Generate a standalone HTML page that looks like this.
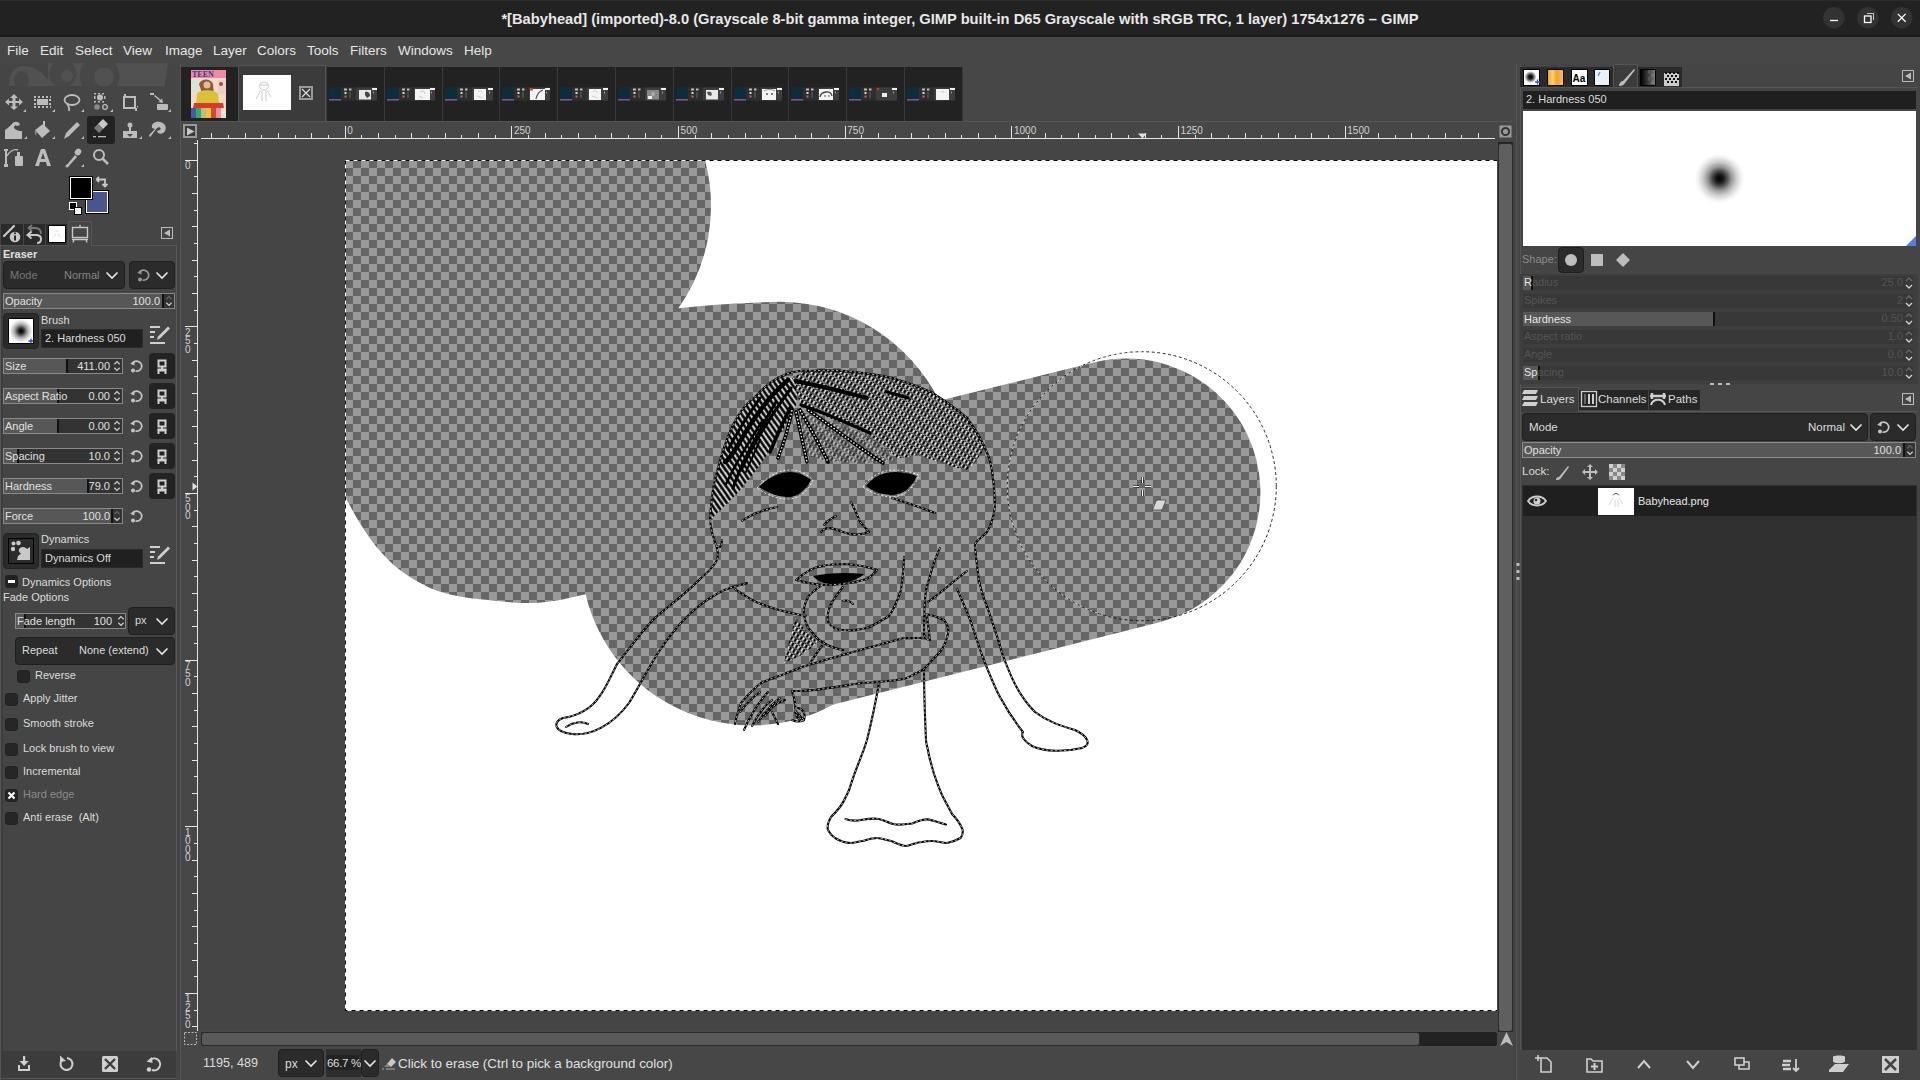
<!DOCTYPE html>
<html><head><meta charset="utf-8">
<style>
*{margin:0;padding:0;box-sizing:border-box}
html,body{width:1920px;height:1080px;overflow:hidden;background:#474747;font-family:"Liberation Sans",sans-serif;color:#dcdcdc}
.a{position:absolute}
#title{left:0;top:0;width:1920px;height:37px;background:#222222}
#title .t{left:0;width:1920px;top:11px;text-align:center;font-weight:bold;font-size:14.7px;color:#e8e8e8;white-space:nowrap}
.wb{width:22px;height:22px;border-radius:11px;background:#323232;top:7px}
#menu{left:0;top:37px;width:1920px;height:27px;background:#474747}
#menu span{position:absolute;top:6px;font-size:13.5px;color:#e6e6e6}

.lbl{position:absolute;font-size:11px;color:#dcdcdc;white-space:pre}
.dim{color:#8a8a8a}
.combo{position:absolute;background:#2b2b2b;border:1px solid #1f1f1f;border-radius:4px}
.sl{position:absolute;height:16px;background:#333;border:1px solid #8a8a8a;overflow:hidden}
.sl .f{position:absolute;left:0;top:0;height:14px;background:#575757}
.sl .k{position:absolute;top:0;width:1px;height:14px;background:#111}
.sl .n{position:absolute;left:1px;top:1px;font-size:11px;color:#e0e0e0;white-space:pre}
.sl .v{position:absolute;top:1px;font-size:11px;color:#e0e0e0;text-align:right}
.chk{position:absolute;width:13px;height:13px;background:#262626;border:1px solid #222;border-radius:3px}
.chain{position:absolute;width:26px;height:26px;background:#232323;border-radius:4px}
</style></head><body>
<svg width="0" height="0" style="position:absolute">
 <defs>
  <symbol id="reset" viewBox="0 0 14 14"><path d="M4.2 3.6 A5 5 0 1 1 6.5 12" fill="none" stroke="#c4c4c4" stroke-width="1.7"/><path d="M1.2 4.8 L5.6 1.2 L5.4 6.4 Z" fill="#c4c4c4"/><circle cx="4" cy="11.5" r="2" fill="#c4c4c4"/></symbol>
  <symbol id="chain" viewBox="0 0 26 26"><rect x="9.5" y="7.5" width="7" height="6" fill="none" stroke="#d0d0d0" stroke-width="2"/><rect x="12" y="13" width="2" height="3" fill="#d0d0d0"/><path d="M9.5 21 L9.5 17.5 L16.5 17.5 L16.5 21" fill="none" stroke="#d0d0d0" stroke-width="2"/><rect x="8.5" y="15.5" width="9" height="2" fill="#d0d0d0"/></symbol>
  <symbol id="spin" viewBox="0 0 10 16"><path d="M2 6 L5 3 L8 6 M2 10 L5 13 L8 10" fill="none" stroke="#cfcfcf" stroke-width="1.4"/></symbol>
  <symbol id="spind" viewBox="0 0 10 16"><path d="M2 6 L5 3 L8 6" fill="none" stroke="#666" stroke-width="1.4"/><path d="M2 10 L5 13 L8 10" fill="none" stroke="#cfcfcf" stroke-width="1.4"/></symbol>
  <symbol id="chev" viewBox="0 0 14 10"><path d="M1.5 2.5 L7 8 L12.5 2.5" fill="none" stroke="#e6e6e6" stroke-width="1.6"/></symbol>
  <symbol id="edit" viewBox="0 0 20 20"><path d="M0 1h10v2h-10zM0 6h5v2h-5zM0 11h4v2h-4zM0 17h15v2h-15z" fill="#cfcfcf"/><path d="M7 15 L8 11.5 L18 1.5 L20 3.5 L10 13.5 Z" fill="#cfcfcf"/></symbol>
<!-- SHOTS -->
<symbol id="shot0" viewBox="0 0 48 14"><rect width="48" height="14" fill="#262626"/><rect x="0" y="0.5" width="12" height="11.5" fill="#0d2d3a"/><rect x="0" y="12" width="12" height="1.5" fill="#7a5a8a"/><rect x="12" y="0.5" width="15" height="13" fill="#2e2e2e"/><rect x="15" y="1.5" width="3" height="2" fill="#c8bcae"/><rect x="20" y="1.5" width="2.5" height="2" fill="#bbb"/><rect x="15.5" y="5" width="2" height="2" fill="#ddd"/><rect x="15.5" y="8.5" width="2" height="2" fill="#c66"/><rect x="20.5" y="5" width="1" height="6" fill="#666"/><rect x="27" y="0.5" width="21" height="13" fill="#3d3d3d"/><rect x="30" y="3" width="12" height="9.5" fill="#e8e8e8"/><path d="M36 5 C40 4 41 7 41 9 L38 11 L36 8 Z" fill="#444"/><rect x="43" y="1" width="5" height="2" fill="#f0f0f0"/><rect x="44" y="4.5" width="1" height="2" fill="#999"/></symbol>
<symbol id="shot1" viewBox="0 0 48 14"><rect width="48" height="14" fill="#262626"/><rect x="0" y="0.5" width="12" height="11.5" fill="#0d2d3a"/><rect x="0" y="12" width="12" height="1.5" fill="#7a5a8a"/><rect x="12" y="0.5" width="15" height="13" fill="#2e2e2e"/><rect x="15" y="1.5" width="3" height="2" fill="#c8bcae"/><rect x="20" y="1.5" width="2.5" height="2" fill="#bbb"/><rect x="15.5" y="5" width="2" height="2" fill="#ddd"/><rect x="15.5" y="8.5" width="2" height="2" fill="#c66"/><rect x="20.5" y="5" width="1" height="6" fill="#666"/><rect x="27" y="0.5" width="21" height="13" fill="#3d3d3d"/><rect x="28" y="2" width="15" height="11" fill="#f4f4f4"/><path d="M33 5 C35 3 38 4 38 7 M32 9 L36 11" stroke="#999" stroke-width="0.5" fill="none"/><rect x="43" y="1" width="5" height="2" fill="#f0f0f0"/><rect x="44" y="4.5" width="1" height="2" fill="#999"/></symbol>
<symbol id="shot2" viewBox="0 0 48 14"><rect width="48" height="14" fill="#262626"/><rect x="0" y="0.5" width="12" height="11.5" fill="#0d2d3a"/><rect x="0" y="12" width="12" height="1.5" fill="#7a5a8a"/><rect x="12" y="0.5" width="15" height="13" fill="#2e2e2e"/><rect x="15" y="1.5" width="3" height="2" fill="#c8bcae"/><rect x="20" y="1.5" width="2.5" height="2" fill="#bbb"/><rect x="15.5" y="5" width="2" height="2" fill="#ddd"/><rect x="15.5" y="8.5" width="2" height="2" fill="#c66"/><rect x="20.5" y="5" width="1" height="6" fill="#666"/><rect x="27" y="0.5" width="21" height="13" fill="#3d3d3d"/><rect x="29" y="2" width="12" height="11" fill="#f4f4f4"/><path d="M33 5 C34 3 37 3 37 6 M32 9 L38 11" stroke="#aaa" stroke-width="0.5" fill="none"/><rect x="43" y="1" width="5" height="2" fill="#f0f0f0"/><rect x="44" y="4.5" width="1" height="2" fill="#999"/></symbol>
<symbol id="shot3" viewBox="0 0 48 14"><rect width="48" height="14" fill="#262626"/><rect x="0" y="0.5" width="12" height="11.5" fill="#0d2d3a"/><rect x="0" y="12" width="12" height="1.5" fill="#7a5a8a"/><rect x="12" y="0.5" width="15" height="13" fill="#2e2e2e"/><rect x="15" y="1.5" width="3" height="2" fill="#c8bcae"/><rect x="20" y="1.5" width="2.5" height="2" fill="#bbb"/><rect x="15.5" y="5" width="2" height="2" fill="#ddd"/><rect x="15.5" y="8.5" width="2" height="2" fill="#c66"/><rect x="20.5" y="5" width="1" height="6" fill="#666"/><rect x="27" y="0.5" width="21" height="13" fill="#3d3d3d"/><rect x="28" y="2" width="15" height="11" fill="#f4f4f4"/><path d="M34 12 C35 7 38 4 41 3" stroke="#555" stroke-width="1.2" fill="none"/><rect x="28" y="1" width="3" height="2.5" fill="#c44"/><rect x="43" y="1" width="5" height="2" fill="#f0f0f0"/><rect x="44" y="4.5" width="1" height="2" fill="#999"/></symbol>
<symbol id="shot4" viewBox="0 0 48 14"><rect width="48" height="14" fill="#262626"/><rect x="0" y="0.5" width="12" height="11.5" fill="#0d2d3a"/><rect x="0" y="12" width="12" height="1.5" fill="#7a5a8a"/><rect x="12" y="0.5" width="15" height="13" fill="#2e2e2e"/><rect x="15" y="1.5" width="3" height="2" fill="#c8bcae"/><rect x="20" y="1.5" width="2.5" height="2" fill="#bbb"/><rect x="15.5" y="5" width="2" height="2" fill="#ddd"/><rect x="15.5" y="8.5" width="2" height="2" fill="#c66"/><rect x="20.5" y="5" width="1" height="6" fill="#666"/><rect x="27" y="0.5" width="21" height="13" fill="#3d3d3d"/><rect x="29" y="2" width="12" height="11" fill="#f4f4f4"/><path d="M33 5 C34 3 37 3 37 6 M32 9 L38 11" stroke="#aaa" stroke-width="0.5" fill="none"/><rect x="43" y="1" width="5" height="2" fill="#f0f0f0"/><rect x="44" y="4.5" width="1" height="2" fill="#999"/></symbol>
<symbol id="shot5" viewBox="0 0 48 14"><rect width="48" height="14" fill="#262626"/><rect x="0" y="0.5" width="12" height="11.5" fill="#0d2d3a"/><rect x="0" y="12" width="12" height="1.5" fill="#7a5a8a"/><rect x="12" y="0.5" width="15" height="13" fill="#2e2e2e"/><rect x="15" y="1.5" width="3" height="2" fill="#c8bcae"/><rect x="20" y="1.5" width="2.5" height="2" fill="#bbb"/><rect x="15.5" y="5" width="2" height="2" fill="#ddd"/><rect x="15.5" y="8.5" width="2" height="2" fill="#c66"/><rect x="20.5" y="5" width="1" height="6" fill="#666"/><rect x="27" y="0.5" width="21" height="13" fill="#3d3d3d"/><rect x="29" y="3" width="12" height="9.5" fill="#888"/><rect x="30" y="9" width="4" height="3" fill="#eee"/><circle cx="35" cy="7" r="2" fill="#aaa"/><rect x="43" y="1" width="5" height="2" fill="#f0f0f0"/><rect x="44" y="4.5" width="1" height="2" fill="#999"/></symbol>
<symbol id="shot6" viewBox="0 0 48 14"><rect width="48" height="14" fill="#262626"/><rect x="0" y="0.5" width="12" height="11.5" fill="#0d2d3a"/><rect x="0" y="12" width="12" height="1.5" fill="#7a5a8a"/><rect x="12" y="0.5" width="15" height="13" fill="#2e2e2e"/><rect x="15" y="1.5" width="3" height="2" fill="#c8bcae"/><rect x="20" y="1.5" width="2.5" height="2" fill="#bbb"/><rect x="15.5" y="5" width="2" height="2" fill="#ddd"/><rect x="15.5" y="8.5" width="2" height="2" fill="#c66"/><rect x="20.5" y="5" width="1" height="6" fill="#666"/><rect x="27" y="0.5" width="21" height="13" fill="#3d3d3d"/><rect x="30" y="3" width="12" height="9.5" fill="#e8e8e8"/><path d="M31 5 C35 4 37 6 35 9 L32 8 Z" fill="#555"/><rect x="43" y="1" width="5" height="2" fill="#f0f0f0"/><rect x="44" y="4.5" width="1" height="2" fill="#999"/></symbol>
<symbol id="shot7" viewBox="0 0 48 14"><rect width="48" height="14" fill="#262626"/><rect x="0" y="0.5" width="12" height="11.5" fill="#0d2d3a"/><rect x="0" y="12" width="12" height="1.5" fill="#7a5a8a"/><rect x="12" y="0.5" width="15" height="13" fill="#2e2e2e"/><rect x="15" y="1.5" width="3" height="2" fill="#c8bcae"/><rect x="20" y="1.5" width="2.5" height="2" fill="#bbb"/><rect x="15.5" y="5" width="2" height="2" fill="#ddd"/><rect x="15.5" y="8.5" width="2" height="2" fill="#c66"/><rect x="20.5" y="5" width="1" height="6" fill="#666"/><rect x="27" y="0.5" width="21" height="13" fill="#3d3d3d"/><rect x="28" y="2" width="14" height="11" fill="#f4f4f4"/><circle cx="33" cy="7" r="1" fill="#555"/><circle cx="38" cy="7" r="1" fill="#555"/><path d="M30 4 C33 2 38 2 41 4" stroke="#666" stroke-width="0.7" fill="none"/><rect x="43" y="1" width="5" height="2" fill="#f0f0f0"/><rect x="44" y="4.5" width="1" height="2" fill="#999"/></symbol>
<symbol id="shot8" viewBox="0 0 48 14"><rect width="48" height="14" fill="#262626"/><rect x="0" y="0.5" width="12" height="11.5" fill="#0d2d3a"/><rect x="0" y="12" width="12" height="1.5" fill="#7a5a8a"/><rect x="12" y="0.5" width="15" height="13" fill="#2e2e2e"/><rect x="15" y="1.5" width="3" height="2" fill="#c8bcae"/><rect x="20" y="1.5" width="2.5" height="2" fill="#bbb"/><rect x="15.5" y="5" width="2" height="2" fill="#ddd"/><rect x="15.5" y="8.5" width="2" height="2" fill="#c66"/><rect x="20.5" y="5" width="1" height="6" fill="#666"/><rect x="27" y="0.5" width="21" height="13" fill="#3d3d3d"/><rect x="28" y="2" width="14" height="11" fill="#f4f4f4"/><path d="M29 10 C30 4 40 3 41 9" stroke="#444" stroke-width="1.3" fill="none"/><circle cx="34" cy="9" r="0.8" fill="#444"/><circle cx="38" cy="9" r="0.8" fill="#444"/><rect x="43" y="1" width="5" height="2" fill="#f0f0f0"/><rect x="44" y="4.5" width="1" height="2" fill="#999"/></symbol>
<symbol id="shot9" viewBox="0 0 48 14"><rect width="48" height="14" fill="#262626"/><rect x="0" y="0.5" width="12" height="11.5" fill="#0d2d3a"/><rect x="0" y="12" width="12" height="1.5" fill="#7a5a8a"/><rect x="12" y="0.5" width="15" height="13" fill="#2e2e2e"/><rect x="15" y="1.5" width="3" height="2" fill="#c8bcae"/><rect x="20" y="1.5" width="2.5" height="2" fill="#bbb"/><rect x="15.5" y="5" width="2" height="2" fill="#ddd"/><rect x="15.5" y="8.5" width="2" height="2" fill="#c66"/><rect x="20.5" y="5" width="1" height="6" fill="#666"/><rect x="27" y="0.5" width="21" height="13" fill="#3d3d3d"/><rect x="33" y="6" width="5" height="4" fill="#eee"/><circle cx="29" cy="2" r="1.2" fill="#c33"/><rect x="43" y="1" width="5" height="2" fill="#f0f0f0"/><rect x="44" y="4.5" width="1" height="2" fill="#999"/></symbol>
<symbol id="shot10" viewBox="0 0 48 14"><rect width="48" height="14" fill="#262626"/><rect x="0" y="0.5" width="12" height="11.5" fill="#0d2d3a"/><rect x="0" y="12" width="12" height="1.5" fill="#7a5a8a"/><rect x="12" y="0.5" width="15" height="13" fill="#2e2e2e"/><rect x="15" y="1.5" width="3" height="2" fill="#c8bcae"/><rect x="20" y="1.5" width="2.5" height="2" fill="#bbb"/><rect x="15.5" y="5" width="2" height="2" fill="#ddd"/><rect x="15.5" y="8.5" width="2" height="2" fill="#c66"/><rect x="20.5" y="5" width="1" height="6" fill="#666"/><rect x="27" y="0.5" width="21" height="13" fill="#3d3d3d"/><rect x="29" y="2" width="13" height="11" fill="#f4f4f4"/><path d="M34 5 C35 4 37 4 37 6" stroke="#aaa" stroke-width="0.5" fill="none"/><rect x="43" y="1" width="5" height="2" fill="#f0f0f0"/><rect x="44" y="4.5" width="1" height="2" fill="#999"/></symbol>
<!-- END SHOTS -->
 </defs>
</svg>
<div id="title" class="a">
  <div class="a t">*[Babyhead] (imported)-8.0 (Grayscale 8-bit gamma integer, GIMP built-in D65 Grayscale with sRGB TRC, 1 layer) 1754x1276 – GIMP</div>
  <div class="a" style="left:0;top:0;width:1920px;height:1px;background:#2c2c2c"></div>
  <div class="a" style="left:0;top:35px;width:1920px;height:2px;background:#1c1c1c"></div>
  <svg class="a" style="left:1820px;top:4px" width="96" height="28"><g fill="#333"><circle cx="13.8" cy="13.8" r="10.7"/><circle cx="47.9" cy="13.8" r="10.7"/><circle cx="81.7" cy="13.8" r="10.7"/></g>
  <path d="M10 16.5 H18" stroke="#fff" stroke-width="1.3"/>
  <rect x="44.5" y="12" width="6.5" height="6.5" fill="none" stroke="#fff" stroke-width="1.3"/><path d="M47 9.5 H53.5 V16" fill="none" stroke="#ddd" stroke-width="0.9"/>
  <path d="M77.8 9.9 L85.6 17.7 M85.6 9.9 L77.8 17.7" stroke="#fff" stroke-width="1.3"/></svg>
</div>
<div id="menu" class="a">
  <span style="left:7px">File</span><span style="left:40px">Edit</span><span style="left:75px">Select</span><span style="left:123px">View</span><span style="left:165px">Image</span><span style="left:213px">Layer</span><span style="left:257px">Colors</span><span style="left:307px">Tools</span><span style="left:350px">Filters</span><span style="left:398px">Windows</span><span style="left:464px">Help</span>
</div>
<!-- CANVAS AREA -->
<div id="canvasarea">
<div class="a" style="left:181px;top:67px;width:782px;height:54px;background:#222"></div>
<div class="a" style="left:238px;top:65px;width:88px;height:57px;background:#3b3b3b;border:1px solid #555;border-bottom:none"></div>
<svg class="a" style="left:191px;top:70px" width="35" height="48" viewBox="0 0 35 48">
<rect width="35" height="48" fill="#f2d9cc"/>
<rect width="35" height="8" fill="#ef8aa2"/>
<text x="1" y="7" font-family="Liberation Serif" font-weight="bold" font-size="8" fill="#2c3c8c">TEEN</text>
<path d="M8 14 C10 8 20 8 22 14 L23 26 L12 26 Z" fill="#8a5a3a"/>
<circle cx="16" cy="15" r="3.5" fill="#e8b89a"/>
<path d="M6 24 C8 19 24 19 27 24 L28 33 L5 33 Z" fill="#d9c23a"/>
<path d="M3 33 L32 33 L33 38 L2 38 Z" fill="#d83a2a"/>
<rect x="27" y="10" width="7" height="14" fill="#e8d0c8"/><circle cx="30" cy="14" r="2" fill="#a84a3a"/>
<rect x="1" y="10" width="6" height="12" fill="#cfe8d8"/>
<rect y="38" width="5" height="10" fill="#4a5aa0"/><rect x="5" y="38" width="5" height="10" fill="#2eab78"/><rect x="10" y="38" width="5" height="10" fill="#c2bd72"/><rect x="15" y="38" width="5" height="10" fill="#f0c038"/><rect x="20" y="38" width="5" height="10" fill="#cc4a3a"/><rect x="25" y="38" width="5" height="10" fill="#f4909a"/><rect x="30" y="38" width="5" height="10" fill="#f2e0d0"/>
</svg>
<div class="a" style="left:243px;top:75px;width:48px;height:35px;background:#fff"></div>
<svg class="a" style="left:243px;top:75px" width="48" height="35"><g fill="none" stroke="#aaa" stroke-width="0.6"><ellipse cx="21" cy="11" rx="4.5" ry="4"/><path d="M17 10 L25 10 M18 15 L13 24 M24 15 L28 22 M19 16 L19 26 M23 16 L23 26"/></g></svg>
<div class="a" style="left:299px;top:86px;width:14px;height:14px;border:2px solid #999"></div>
<svg class="a" style="left:301px;top:88px" width="10" height="10"><path d="M1 1 L9 9 M9 1 L1 9" stroke="#ddd" stroke-width="1.2"/></svg>
<div class="a" style="left:326.0px;top:67px;width:1px;height:54px;background:#3a3a3a"></div>
<svg class="a" style="left:329.0px;top:87px" width="48" height="14"><use href="#shot0"/></svg>
<div class="a" style="left:383.8px;top:67px;width:1px;height:54px;background:#3a3a3a"></div>
<svg class="a" style="left:386.8px;top:87px" width="48" height="14"><use href="#shot1"/></svg>
<div class="a" style="left:441.6px;top:67px;width:1px;height:54px;background:#3a3a3a"></div>
<svg class="a" style="left:444.6px;top:87px" width="48" height="14"><use href="#shot2"/></svg>
<div class="a" style="left:499.4px;top:67px;width:1px;height:54px;background:#3a3a3a"></div>
<svg class="a" style="left:502.4px;top:87px" width="48" height="14"><use href="#shot3"/></svg>
<div class="a" style="left:557.2px;top:67px;width:1px;height:54px;background:#3a3a3a"></div>
<svg class="a" style="left:560.2px;top:87px" width="48" height="14"><use href="#shot4"/></svg>
<div class="a" style="left:615.0px;top:67px;width:1px;height:54px;background:#3a3a3a"></div>
<svg class="a" style="left:618.0px;top:87px" width="48" height="14"><use href="#shot5"/></svg>
<div class="a" style="left:672.8px;top:67px;width:1px;height:54px;background:#3a3a3a"></div>
<svg class="a" style="left:675.8px;top:87px" width="48" height="14"><use href="#shot6"/></svg>
<div class="a" style="left:730.6px;top:67px;width:1px;height:54px;background:#3a3a3a"></div>
<svg class="a" style="left:733.6px;top:87px" width="48" height="14"><use href="#shot7"/></svg>
<div class="a" style="left:788.4px;top:67px;width:1px;height:54px;background:#3a3a3a"></div>
<svg class="a" style="left:791.4px;top:87px" width="48" height="14"><use href="#shot8"/></svg>
<div class="a" style="left:846.2px;top:67px;width:1px;height:54px;background:#3a3a3a"></div>
<svg class="a" style="left:849.2px;top:87px" width="48" height="14"><use href="#shot9"/></svg>
<div class="a" style="left:904.0px;top:67px;width:1px;height:54px;background:#3a3a3a"></div>
<svg class="a" style="left:907.0px;top:87px" width="48" height="14"><use href="#shot10"/></svg>
<div class="a" style="left:962px;top:67px;width:1px;height:54px;background:#3a3a3a"></div>
<div class="a" style="left:180px;top:121px;width:1336px;height:1px;background:#555"></div>
<div class="a" style="left:183px;top:124px;width:14px;height:14px;border:2px solid #9a9a9a;background:#3a3a3a"></div>
<svg class="a" style="left:186px;top:127px" width="9" height="9"><path d="M1 0.5 L8.5 4.5 L1 8.5 Z" fill="#c8c8c8"/></svg>
<svg class="a" style="left:198px;top:121px" width="1300" height="19" viewBox="198 121 1300 19"><rect x="201" y="138" width="1294" height="1" fill="#e6e6e6"/><rect x="211" y="133" width="1" height="5" fill="#e6e6e6"/><rect x="228" y="135" width="1" height="3" fill="#e6e6e6"/><rect x="245" y="133" width="1" height="5" fill="#e6e6e6"/><rect x="261" y="135" width="1" height="3" fill="#e6e6e6"/><rect x="278" y="133" width="1" height="5" fill="#e6e6e6"/><rect x="295" y="135" width="1" height="3" fill="#e6e6e6"/><rect x="311" y="133" width="1" height="5" fill="#e6e6e6"/><rect x="328" y="135" width="1" height="3" fill="#e6e6e6"/><rect x="345" y="126" width="1" height="12" fill="#e6e6e6"/><text x="347.3" y="134" font-size="10" fill="#d0d0d0" font-family="Liberation Sans">0</text><rect x="361" y="135" width="1" height="3" fill="#e6e6e6"/><rect x="378" y="133" width="1" height="5" fill="#e6e6e6"/><rect x="395" y="135" width="1" height="3" fill="#e6e6e6"/><rect x="411" y="133" width="1" height="5" fill="#e6e6e6"/><rect x="428" y="135" width="1" height="3" fill="#e6e6e6"/><rect x="445" y="133" width="1" height="5" fill="#e6e6e6"/><rect x="461" y="135" width="1" height="3" fill="#e6e6e6"/><rect x="478" y="133" width="1" height="5" fill="#e6e6e6"/><rect x="495" y="135" width="1" height="3" fill="#e6e6e6"/><rect x="511" y="126" width="1" height="12" fill="#e6e6e6"/><text x="514.0" y="134" font-size="10" fill="#d0d0d0" font-family="Liberation Sans">250</text><rect x="528" y="135" width="1" height="3" fill="#e6e6e6"/><rect x="545" y="133" width="1" height="5" fill="#e6e6e6"/><rect x="561" y="135" width="1" height="3" fill="#e6e6e6"/><rect x="578" y="133" width="1" height="5" fill="#e6e6e6"/><rect x="595" y="135" width="1" height="3" fill="#e6e6e6"/><rect x="611" y="133" width="1" height="5" fill="#e6e6e6"/><rect x="628" y="135" width="1" height="3" fill="#e6e6e6"/><rect x="645" y="133" width="1" height="5" fill="#e6e6e6"/><rect x="661" y="135" width="1" height="3" fill="#e6e6e6"/><rect x="678" y="126" width="1" height="12" fill="#e6e6e6"/><text x="680.6" y="134" font-size="10" fill="#d0d0d0" font-family="Liberation Sans">500</text><rect x="695" y="135" width="1" height="3" fill="#e6e6e6"/><rect x="711" y="133" width="1" height="5" fill="#e6e6e6"/><rect x="728" y="135" width="1" height="3" fill="#e6e6e6"/><rect x="745" y="133" width="1" height="5" fill="#e6e6e6"/><rect x="761" y="135" width="1" height="3" fill="#e6e6e6"/><rect x="778" y="133" width="1" height="5" fill="#e6e6e6"/><rect x="795" y="135" width="1" height="3" fill="#e6e6e6"/><rect x="811" y="133" width="1" height="5" fill="#e6e6e6"/><rect x="828" y="135" width="1" height="3" fill="#e6e6e6"/><rect x="845" y="126" width="1" height="12" fill="#e6e6e6"/><text x="847.3" y="134" font-size="10" fill="#d0d0d0" font-family="Liberation Sans">750</text><rect x="861" y="135" width="1" height="3" fill="#e6e6e6"/><rect x="878" y="133" width="1" height="5" fill="#e6e6e6"/><rect x="895" y="135" width="1" height="3" fill="#e6e6e6"/><rect x="911" y="133" width="1" height="5" fill="#e6e6e6"/><rect x="928" y="135" width="1" height="3" fill="#e6e6e6"/><rect x="945" y="133" width="1" height="5" fill="#e6e6e6"/><rect x="961" y="135" width="1" height="3" fill="#e6e6e6"/><rect x="978" y="133" width="1" height="5" fill="#e6e6e6"/><rect x="995" y="135" width="1" height="3" fill="#e6e6e6"/><rect x="1011" y="126" width="1" height="12" fill="#e6e6e6"/><text x="1014.0" y="134" font-size="10" fill="#d0d0d0" font-family="Liberation Sans">1000</text><rect x="1028" y="135" width="1" height="3" fill="#e6e6e6"/><rect x="1045" y="133" width="1" height="5" fill="#e6e6e6"/><rect x="1061" y="135" width="1" height="3" fill="#e6e6e6"/><rect x="1078" y="133" width="1" height="5" fill="#e6e6e6"/><rect x="1095" y="135" width="1" height="3" fill="#e6e6e6"/><rect x="1111" y="133" width="1" height="5" fill="#e6e6e6"/><rect x="1128" y="135" width="1" height="3" fill="#e6e6e6"/><rect x="1145" y="133" width="1" height="5" fill="#e6e6e6"/><rect x="1161" y="135" width="1" height="3" fill="#e6e6e6"/><rect x="1178" y="126" width="1" height="12" fill="#e6e6e6"/><text x="1180.6" y="134" font-size="10" fill="#d0d0d0" font-family="Liberation Sans">1250</text><rect x="1195" y="135" width="1" height="3" fill="#e6e6e6"/><rect x="1211" y="133" width="1" height="5" fill="#e6e6e6"/><rect x="1228" y="135" width="1" height="3" fill="#e6e6e6"/><rect x="1245" y="133" width="1" height="5" fill="#e6e6e6"/><rect x="1261" y="135" width="1" height="3" fill="#e6e6e6"/><rect x="1278" y="133" width="1" height="5" fill="#e6e6e6"/><rect x="1295" y="135" width="1" height="3" fill="#e6e6e6"/><rect x="1311" y="133" width="1" height="5" fill="#e6e6e6"/><rect x="1328" y="135" width="1" height="3" fill="#e6e6e6"/><rect x="1345" y="126" width="1" height="12" fill="#e6e6e6"/><text x="1347.3" y="134" font-size="10" fill="#d0d0d0" font-family="Liberation Sans">1500</text><rect x="1361" y="135" width="1" height="3" fill="#e6e6e6"/><rect x="1378" y="133" width="1" height="5" fill="#e6e6e6"/><rect x="1395" y="135" width="1" height="3" fill="#e6e6e6"/><rect x="1411" y="133" width="1" height="5" fill="#e6e6e6"/><rect x="1428" y="135" width="1" height="3" fill="#e6e6e6"/><rect x="1445" y="133" width="1" height="5" fill="#e6e6e6"/><rect x="1461" y="135" width="1" height="3" fill="#e6e6e6"/><rect x="1478" y="133" width="1" height="5" fill="#e6e6e6"/></svg>
<svg class="a" style="left:181px;top:139px" width="18" height="893" viewBox="181 139 18 893"><rect x="197" y="140" width="1" height="891" fill="#e6e6e6"/><rect x="194" y="143" width="3" height="1" fill="#e6e6e6"/><rect x="185" y="160" width="12" height="1" fill="#e6e6e6"/><text x="185" y="168.8" font-size="10" fill="#d0d0d0" font-family="Liberation Sans">0</text><rect x="194" y="176" width="3" height="1" fill="#e6e6e6"/><rect x="192" y="193" width="5" height="1" fill="#e6e6e6"/><rect x="194" y="210" width="3" height="1" fill="#e6e6e6"/><rect x="192" y="226" width="5" height="1" fill="#e6e6e6"/><rect x="194" y="243" width="3" height="1" fill="#e6e6e6"/><rect x="192" y="260" width="5" height="1" fill="#e6e6e6"/><rect x="194" y="276" width="3" height="1" fill="#e6e6e6"/><rect x="192" y="293" width="5" height="1" fill="#e6e6e6"/><rect x="194" y="310" width="3" height="1" fill="#e6e6e6"/><rect x="185" y="326" width="12" height="1" fill="#e6e6e6"/><text x="185" y="335.5" font-size="10" fill="#d0d0d0" font-family="Liberation Sans">2</text><text x="185" y="344.1" font-size="10" fill="#d0d0d0" font-family="Liberation Sans">5</text><text x="185" y="352.7" font-size="10" fill="#d0d0d0" font-family="Liberation Sans">0</text><rect x="194" y="343" width="3" height="1" fill="#e6e6e6"/><rect x="192" y="360" width="5" height="1" fill="#e6e6e6"/><rect x="194" y="376" width="3" height="1" fill="#e6e6e6"/><rect x="192" y="393" width="5" height="1" fill="#e6e6e6"/><rect x="194" y="410" width="3" height="1" fill="#e6e6e6"/><rect x="192" y="426" width="5" height="1" fill="#e6e6e6"/><rect x="194" y="443" width="3" height="1" fill="#e6e6e6"/><rect x="192" y="460" width="5" height="1" fill="#e6e6e6"/><rect x="194" y="476" width="3" height="1" fill="#e6e6e6"/><rect x="185" y="493" width="12" height="1" fill="#e6e6e6"/><text x="185" y="502.1" font-size="10" fill="#d0d0d0" font-family="Liberation Sans">5</text><text x="185" y="510.7" font-size="10" fill="#d0d0d0" font-family="Liberation Sans">0</text><text x="185" y="519.3" font-size="10" fill="#d0d0d0" font-family="Liberation Sans">0</text><rect x="194" y="510" width="3" height="1" fill="#e6e6e6"/><rect x="192" y="526" width="5" height="1" fill="#e6e6e6"/><rect x="194" y="543" width="3" height="1" fill="#e6e6e6"/><rect x="192" y="560" width="5" height="1" fill="#e6e6e6"/><rect x="194" y="576" width="3" height="1" fill="#e6e6e6"/><rect x="192" y="593" width="5" height="1" fill="#e6e6e6"/><rect x="194" y="610" width="3" height="1" fill="#e6e6e6"/><rect x="192" y="626" width="5" height="1" fill="#e6e6e6"/><rect x="194" y="643" width="3" height="1" fill="#e6e6e6"/><rect x="185" y="660" width="12" height="1" fill="#e6e6e6"/><text x="185" y="668.8" font-size="10" fill="#d0d0d0" font-family="Liberation Sans">7</text><text x="185" y="677.4" font-size="10" fill="#d0d0d0" font-family="Liberation Sans">5</text><text x="185" y="686.0" font-size="10" fill="#d0d0d0" font-family="Liberation Sans">0</text><rect x="194" y="676" width="3" height="1" fill="#e6e6e6"/><rect x="192" y="693" width="5" height="1" fill="#e6e6e6"/><rect x="194" y="710" width="3" height="1" fill="#e6e6e6"/><rect x="192" y="726" width="5" height="1" fill="#e6e6e6"/><rect x="194" y="743" width="3" height="1" fill="#e6e6e6"/><rect x="192" y="760" width="5" height="1" fill="#e6e6e6"/><rect x="194" y="776" width="3" height="1" fill="#e6e6e6"/><rect x="192" y="793" width="5" height="1" fill="#e6e6e6"/><rect x="194" y="810" width="3" height="1" fill="#e6e6e6"/><rect x="185" y="826" width="12" height="1" fill="#e6e6e6"/><text x="185" y="835.5" font-size="10" fill="#d0d0d0" font-family="Liberation Sans">1</text><text x="185" y="844.1" font-size="10" fill="#d0d0d0" font-family="Liberation Sans">0</text><text x="185" y="852.7" font-size="10" fill="#d0d0d0" font-family="Liberation Sans">0</text><text x="185" y="861.3" font-size="10" fill="#d0d0d0" font-family="Liberation Sans">0</text><rect x="194" y="843" width="3" height="1" fill="#e6e6e6"/><rect x="192" y="860" width="5" height="1" fill="#e6e6e6"/><rect x="194" y="876" width="3" height="1" fill="#e6e6e6"/><rect x="192" y="893" width="5" height="1" fill="#e6e6e6"/><rect x="194" y="910" width="3" height="1" fill="#e6e6e6"/><rect x="192" y="926" width="5" height="1" fill="#e6e6e6"/><rect x="194" y="943" width="3" height="1" fill="#e6e6e6"/><rect x="192" y="960" width="5" height="1" fill="#e6e6e6"/><rect x="194" y="976" width="3" height="1" fill="#e6e6e6"/><rect x="185" y="993" width="12" height="1" fill="#e6e6e6"/><text x="185" y="1002.1" font-size="10" fill="#d0d0d0" font-family="Liberation Sans">1</text><text x="185" y="1010.7" font-size="10" fill="#d0d0d0" font-family="Liberation Sans">2</text><text x="185" y="1019.3" font-size="10" fill="#d0d0d0" font-family="Liberation Sans">5</text><text x="185" y="1027.9" font-size="10" fill="#d0d0d0" font-family="Liberation Sans">0</text><rect x="194" y="1010" width="3" height="1" fill="#e6e6e6"/><rect x="192" y="1026" width="5" height="1" fill="#e6e6e6"/></svg>
<div class="a" style="left:198px;top:139px;width:1299px;height:891px;overflow:hidden;background:#454545">
<svg class="a" style="left:0;top:0" width="1299" height="891" viewBox="198 139 1299 891">
<defs><pattern id="chk" x="345" y="160" width="16" height="16" patternUnits="userSpaceOnUse"><rect width="16" height="16" fill="#666"/><rect width="8" height="8" fill="#999"/><rect x="8" y="8" width="8" height="8" fill="#999"/></pattern>
<pattern id="hatch" width="5" height="5" patternUnits="userSpaceOnUse" patternTransform="rotate(-55)"><rect width="5" height="5" fill="#fff"/><rect width="2.2" height="5" fill="#000"/></pattern></defs>
<rect x="345" y="160" width="1170" height="851" fill="#fff"/>
<path d="M345,160 L705,160.3 A176.6,176.6 0 0,1 678.3,308.3 Q725,303 779.5,301.7 A178.6,178.6 0 0,1 939.2,400.8 L1091.2,363.1 A134,134 0 1,1 1156.8,622.9 L833.4,704.6 A170.8,170.8 0 0,1 585.6,594.2 C575.3,596.4 564.9,599.2 554.8,600.7 C544.7,602.2 536.3,603.1 525.2,603.0 C514.1,602.9 499.2,601.1 488.1,600.0 C477.0,598.9 468.4,598.4 458.5,596.3 C448.6,594.2 438.8,591.8 428.9,587.4 C419.0,583.0 407.9,576.3 399.3,569.6 C390.7,562.9 383.7,555.3 377.0,547.4 C370.3,539.5 364.5,530.5 359.3,522.2 C354.1,513.9 350.2,505.9 345.6,497.8 Z" fill="url(#chk)"/>
<defs>
<pattern id="hatch2" width="4.2" height="5" patternUnits="userSpaceOnUse" patternTransform="rotate(30)"><rect x="2" width="1.3" height="5" fill="#fff"/><rect width="2" height="3.6" fill="#000"/><rect x="2" y="3.6" width="1.3" height="1.4" fill="#000"/></pattern>
<pattern id="hatch3" width="4.5" height="5" patternUnits="userSpaceOnUse" patternTransform="rotate(-35)"><rect x="2.2" width="1.4" height="5" fill="#eee"/><rect width="2.2" height="5" fill="#000"/></pattern>
</defs>
<!-- hair fills -->
<path d="M710,521 C711,500 713,485 717,472 C722,452 727,438 733,425 C740,410 747,403 755,397 C763,388 771,381 780,377 L793,378 C797,385 798,395 796,405 C790,418 780,435 767,455 C758,468 750,478 742,488 C733,498 724,507 717,513 Z" fill="url(#hatch3)"/>
<path d="M793,378 C800,373 805,371 808,371 C822,370 836,370 850,372 C864,373 878,375 892,378 C906,382 920,387 933,393 C946,402 957,409 967,418 C974,426 979,434 983,442 C985,447 983,452 980,455 C976,462 972,466 967,470 C958,468 950,466 942,463 C933,460 925,457 917,455 C910,457 903,458 897,458 C888,450 878,441 867,433 C845,425 822,415 800,405 Z" fill="url(#hatch2)"/>
<path d="M797,408 C820,418 845,428 867,434 C878,442 888,452 895,460 C880,463 860,463 840,462 C825,460 812,458 805,455 C800,440 797,425 797,408 Z" fill="url(#hatch2)" opacity="0.55"/>
<!-- black streaks -->
<g fill="none" stroke="#000" stroke-linecap="round">
 <path d="M788,380 C770,395 752,420 738,445 C732,455 728,460 725,462" stroke-width="4.5"/>
 <path d="M776,402 C765,420 752,445 742,465 C738,475 735,482 733,488" stroke-width="3"/>
 <path d="M796,381 C820,386 845,392 867,398" stroke-width="4"/>
 <path d="M801,405 C825,413 850,424 870,433" stroke-width="3.2"/>
 <path d="M887,392 C895,394 902,396 908,398" stroke-width="3"/>
 <path d="M760,440 C755,452 750,462 746,472" stroke-width="2"/>
 <path d="M791,388 C775,410 755,440 741,470" stroke-width="3"/>
 <path d="M763,420 C750,440 735,465 726,484" stroke-width="2.5"/>
 <path d="M760,398 C748,415 737,432 728,450" stroke-width="3"/>
</g>
<!-- forehead strands -->
<g fill="none" stroke="#000" stroke-width="3.6" stroke-linecap="round">
 <path d="M792,410 C788,430 783,445 778,458"/>
 <path d="M796,412 C800,430 804,448 807,462"/>
 <path d="M800,410 C810,428 820,445 828,462"/>
 <path d="M808,410 C830,425 855,445 883,463"/>
 <path d="M790,408 C784,420 777,435 770,452"/>
</g>
<g fill="none" stroke="#fff" stroke-width="1.4" stroke-dasharray="1.5 2" stroke-linecap="butt">
 <path d="M792,410 C788,430 783,445 778,458"/>
 <path d="M796,412 C800,430 804,448 807,462"/>
 <path d="M800,410 C810,428 820,445 828,462"/>
 <path d="M808,410 C830,425 855,445 883,463"/>
</g>
<!-- eyes -->
<path d="M759,487 C768,477 780,472 790,472 C799,472 806,476 811,480 C806,490 798,497 788,497 C776,497 767,492 759,487 Z" fill="#000"/><path d="M757,488 C767,476 780,470 790,470 C800,470 808,475 813,480 C808,491 799,499 788,499 C775,499 766,494 757,488 Z" fill="none" stroke="#fff" stroke-width="1" stroke-dasharray="2 2" opacity="0.8"/>
<path d="M866,486 C874,476 884,472 895,472 C904,472 911,474 917,476 C912,487 904,494 893,495 C881,495 872,491 866,486 Z" fill="#000"/><path d="M863,487 C872,474 884,470 895,470 C905,470 913,473 919,475 C914,488 905,496 893,497 C880,497 870,492 863,487 Z" fill="none" stroke="#fff" stroke-width="1" stroke-dasharray="2 2" opacity="0.8"/>
<!-- mouth dark -->
<path d="M813,576 C828,573 845,572 864,574 C858,580 845,584 830,584 C822,583 816,580 813,576 Z" fill="#000"/>
<!-- chin shading -->
<path d="M784,663 C788,645 792,628 796,618 C803,628 810,636 818,642 C810,650 798,658 784,663 Z" fill="url(#hatch2)"/>
<!-- fingers cluster -->

<g id="lines" fill="none" stroke-linecap="round" stroke-linejoin="round">
 <path d="M710,521 C711,500 713,485 717,472 C722,452 727,438 733,425 C740,410 747,403 755,397 C763,388 771,381 780,377 C790,372 800,370 808,371 C836,369 864,372 892,378 C906,382 920,387 933,393 C946,402 957,409 967,418 C976,430 983,442 988,455 C992,465 994,480 995,505 C994,518 991,525 987,532 C982,538 976,540 975,545 C976,560 978,572 979,581 C982,595 986,605 989,612 C994,628 998,638 1002,653 C1010,675 1018,695 1035,712 C1048,722 1062,726 1075,730 C1088,736 1092,745 1082,748 C1065,752 1045,752 1032,746 C1025,742 1020,736 1023,732"/>
 <path d="M710,521 C711,530 714,540 716,545 C720,550 722,545 722,540 M716,545 C718,552 719,556 716,562 C712,568 706,574 700,579 C690,590 670,605 655,618 C638,635 625,655 617,664 C610,678 605,690 599,697 C592,708 578,716 563,718 C552,722 554,732 572,734 C590,736 612,726 629,703 C640,685 648,668 660,650 C672,632 686,616 700,605 C712,596 722,590 733,587 C740,585 745,584 747,583"/>
 <path d="M566,727 C573,722 582,721 588,724"/>
 <path d="M735,589 C745,596 752,601 761,604 C772,608 785,612 796,614 C800,615 803,615 806,616"/>
 <path d="M742,521 C750,515 762,510 777,507"/>
 <path d="M892,498 C905,502 920,507 935,513"/>
 <path d="M851,502 C855,510 858,516 860,522 C864,526 867,530 869,532 C860,536 850,535 840,531 C832,528 826,526 821,532 M824,525 C828,520 832,518 836,516"/>
 <path d="M796,580 C805,572 815,567 822,566 C830,564 838,564 847,564 C858,565 868,567 877,570 C874,574 870,577 867,579 C850,584 835,585 822,585 C812,584 803,582 796,580 Z"/>
 <path d="M822,585 C815,590 810,594 808,597 C805,603 803,608 804,614 C805,622 807,627 810,630 C815,636 818,640 822,642 C830,647 836,649 843,650"/>
 <path d="M843,587 C838,593 833,600 830,606 C828,612 827,618 828,622 C832,628 836,630 843,630 C850,631 858,630 867,628 C875,625 882,620 889,616 C896,606 899,596 901,590 C903,575 904,566 904,557"/>
 <path d="M843,601 C846,600 850,601 853,604"/>
 <path d="M940,548 C934,560 930,575 926,590 C924,605 924,620 924,634 C925,638 927,640 930,640 C928,625 927,615 926,614 M926,614 C932,615 938,617 944,620 C948,625 949,630 948,634 C946,642 943,648 940,652 C932,660 928,665 924,669 C915,674 910,677 904,679 C890,681 878,682 863,683 C840,686 820,690 802,691 C797,691 794,691 792,691 C795,700 796,705 795,710 C797,714 800,716 804,720 C800,722 796,722 792,720"/>
 <path d="M928,638 C920,638 912,638 904,638 C885,643 868,648 853,652 C835,657 818,662 802,667 C795,670 788,672 782,675 C775,677 768,680 761,683 C752,690 746,697 741,703 C738,712 736,718 735,724"/>
 <path d="M744,730 C750,716 758,703 768,692 M752,726 C758,714 764,706 772,700 M758,722 C765,712 772,704 780,698 M740,712 C746,704 752,698 760,692 M765,716 C770,708 776,703 785,700 M772,712 L778,724"/>
 <path d="M795,710 C796,718 800,722 804,720 C806,714 803,709 798,708"/>
 <path d="M810,663 C814,657 818,651 822,646"/>
 <path d="M967,571 C955,580 942,592 928,602"/>
 <path d="M957,589 C962,600 967,612 971,622 C976,638 980,650 985,663 C990,675 995,688 1000,697 C1008,712 1015,722 1023,732"/>
 <path d="M879,683 C876,700 872,720 867,740 C864,750 861,757 859,762 C855,772 852,780 849.5,789 C846,797 843,803 840,807 C836,812 833,815 831,817 C828,822 827,826 828,830 C830,834 832,836 835,838 C840,841 845,843 850.5,843 C855,843 859,841 863,841 C868,839 872,838 877,838 C882,838 886,840 891,841 C896,843 901,846 906.6,846 C912,845 917,842 922,842 C926,841 929,841 932,841 C937,841 942,843 947,843 C952,842 957,840 960.5,838 C963,835 963,832 962.6,829.6 C960,823 956,818 952,814 C949,808 945,801 942,795 C939,788 936,780 934,774 C932,766 929,758 928,750 C927,746 926,743 926,740 C925,718 924,695 924,669"/>
 <path d="M845.5,819 C851,821 856,821 861,820 C867,819 873,818 879,819 C885,820 890,824 896,824.5 C901,825 906,824 912,823.5 C917,822 922,819 927,819.4 C933,820 940,823 946,824.5"/>
</g>
<use href="#lines" stroke="#000" stroke-width="2.1"/>
<use href="#lines" stroke="#fff" stroke-width="0.8" stroke-dasharray="1.5 3" opacity="0.9"/>

<rect x="345.5" y="160.5" width="1170" height="850" fill="none" stroke="#000" stroke-width="1"/>
<rect x="345.5" y="160.5" width="1170" height="850" fill="none" stroke="#fff" stroke-width="1" stroke-dasharray="4 4"/>
<circle cx="1141.8" cy="486.2" r="134.5" fill="none" stroke="#111" stroke-width="1" stroke-dasharray="3 2.5" opacity="0.9"/>
<path d="M1141.8,351.7 A134.5,134.5 0 0,0 1007.3,486.2 A134.5,134.5 0 0,0 1100,614" fill="none" stroke="#ddd" stroke-width="1" stroke-dasharray="3 2.5" opacity="0.8"/>
<g stroke="#000" stroke-width="2.6" opacity="0.7"><path d="M1133,486.5 h6 M1145,486.5 h6 M1142.5,477 v6 M1142.5,490 v6"/></g>
<g stroke="#fff" stroke-width="1"><path d="M1133,486.5 h6 M1145,486.5 h6 M1142.5,477 v6 M1142.5,490 v6"/></g>
<path d="M1152.5,510 L1156,501 Q1157,500 1158.5,500 L1166,500 L1162.5,509 Q1162,510 1160.5,510 Z" fill="#d8d8d8" stroke="#444" stroke-width="0.8"/>
</svg></div>
<svg class="a" style="left:1136px;top:132px" width="12" height="7"><path d="M2 1.5 L10.5 1.5 L6.5 6.5 Z" fill="#e0e0e0"/></svg>
<svg class="a" style="left:191px;top:481px" width="7" height="11"><path d="M1.5 1.5 L6.5 5.5 L1.5 9.5 Z" fill="#e0e0e0"/></svg>
<div class="a" style="left:201px;top:1032px;width:1296px;height:14px;background:#222;border-radius:2px"></div>
<div class="a" style="left:201px;top:1032px;width:1219px;height:14px;background:#5a5a5a;border:1px solid #2a2a2a;border-radius:3px"></div>
<div class="a" style="left:1498px;top:142px;width:15px;height:890px;background:#222"></div>
<div class="a" style="left:1498px;top:143px;width:15px;height:889px;background:#5f5f5f;border:1px solid #2a2a2a;border-radius:3px"></div>
<svg class="a" style="left:1499px;top:125px" width="13" height="13"><rect x="0.5" y="0.5" width="12" height="12" fill="#999"/><circle cx="6.5" cy="6.5" r="3.6" fill="none" stroke="#333" stroke-width="2"/></svg>
<svg class="a" style="left:184px;top:1032px" width="13" height="13"><rect x="0.5" y="0.5" width="12" height="12" fill="#4a4a4a" stroke="#bbb" stroke-dasharray="2 1.5"/></svg>
<svg class="a" style="left:1498px;top:1031px" width="17" height="17"><path d="M8.5 1 L15 15 L8.5 11 L2 15 Z" fill="#bdbdbd"/></svg>
<div class="lbl" style="left:203px;top:1056px;font-size:12.6px;color:#dcdcdc">1195, 489</div>
<div class="combo" style="left:278px;top:1049px;width:46px;height:28px"></div>
<div class="lbl" style="left:285px;top:1057px;font-size:12px">px</div>
<svg class="a" style="left:304px;top:1058px" width="14" height="10"><use href="#chev"/></svg>
<div class="a" style="left:326px;top:1049px;width:35px;height:28px;background:#2e2e2e"></div>
<div class="a" style="left:327px;top:1055px;width:32px;height:15px;background:#222"></div>
<div class="lbl" style="left:327px;top:1057px;font-size:11.5px;letter-spacing:-0.3px">66.7 %</div>
<div class="combo" style="left:361px;top:1049px;width:18px;height:28px"></div>
<svg class="a" style="left:363px;top:1058px" width="14" height="10"><use href="#chev"/></svg>
<svg class="a" style="left:381px;top:1054px" width="16" height="16"><path d="M6 10 L11 4 L15 8 L10 13 Z" fill="#c8c8c8"/><path d="M3 13 L6 10 L9 13 Z" fill="#888"/><rect x="1" y="14.5" width="2" height="1" fill="#aaa"/><rect x="5" y="14.5" width="9" height="1" fill="#aaa"/></svg>
<div class="lbl" style="left:398px;top:1056px;font-size:13.4px;color:#e0e0e0">Click to erase (Ctrl to pick a background color)</div>
<div class="a" style="left:1513px;top:121px;width:3px;height:959px;background:#454545"></div>
<div class="a" style="left:1516px;top:64px;width:1px;height:1016px;background:#555"></div>
<div class="a" style="left:1520px;top:64px;width:1px;height:1016px;background:#555"></div>
<svg class="a" style="left:175px;top:562px" width="6" height="20"><rect x="1.5" y="1" width="3" height="3" fill="#bbb"/><rect x="1.5" y="8" width="3" height="3" fill="#bbb"/><rect x="1.5" y="15" width="3" height="3" fill="#bbb"/></svg>
<svg class="a" style="left:1515px;top:562px" width="6" height="20"><rect x="1.5" y="1" width="3" height="3" fill="#bbb"/><rect x="1.5" y="8" width="3" height="3" fill="#bbb"/><rect x="1.5" y="15" width="3" height="3" fill="#bbb"/></svg>
</div>
<!-- END CANVAS -->
<!-- LEFT -->
<div id="left" class="a" style="left:0;top:0;width:181px;height:1080px;">
 <div class="a" style="left:0;top:64px;width:176px;height:1016px;background:#454545"></div>
 <div class="a" style="left:176px;top:245px;width:1px;height:806px;background:#585858"></div>
 <div class="a" style="left:177px;top:64px;width:3px;height:1016px;background:#454545"></div>
 <div class="a" style="left:180px;top:64px;width:1px;height:1016px;background:#555"></div>
 <!-- wilber -->
 <svg class="a" style="left:0;top:60px" width="176" height="30" viewBox="0 60 176 30">
  <defs><clipPath id="wb"><rect x="0" y="63" width="176" height="23"/></clipPath></defs>
  <g clip-path="url(#wb)">
   <path d="M9 86 C9 72 15 66 24 66 C34 66 42 72 48 80 L48 63 L82 63 L82 86 Z" fill="#515151"/>
   <path d="M117 63 L168 63 L164.5 86 L117 86 Z" fill="#515151"/>
   <rect x="80" y="63" width="38" height="23" fill="#515151"/>
   <ellipse cx="21.5" cy="80" rx="7.5" ry="9" fill="#474747"/>
   <circle cx="62.8" cy="74" r="13.6" fill="#474747"/>
   <circle cx="67" cy="76" r="6.1" fill="#515151"/>
   <circle cx="99.6" cy="76" r="19.9" fill="#474747"/>
   <circle cx="104" cy="77" r="9.8" fill="#515151"/>
  </g>
 </svg>
 <!-- tool icons -->
 <svg class="a" style="left:0;top:88px" width="176" height="84" viewBox="0 88 176 84">
  <rect x="87" y="116" width="28" height="28" rx="3" fill="#222"/>
  <g fill="#bcbcbc" stroke="none">
   <!-- move -->
   <path d="M14 94 L18 98 L15.5 98 L15.5 101 L19 101 L19 98.5 L23 102 L19 105.5 L19 103 L15.5 103 L15.5 106.5 L18 106.5 L14 110 L10 106.5 L12.5 106.5 L12.5 103 L9 103 L9 105.5 L5 102 L9 98.5 L9 101 L12.5 101 L12.5 98 L10 98 Z"/>
   <!-- rect select -->
   <path d="M34 96h2v2h-2zM38 96h2v2h-2zM42 96h2v2h-2zM46 96h2v2h-2zM50 96h1v2h-1zM34 106h2v2h-2zM38 106h2v2h-2zM42 106h2v2h-2zM46 106h2v2h-2zM50 106h1v2h-1zM34 99h2v2h-2zM34 103h2v2h-2zM49 99h2v2h-2zM49 103h2v2h-2z"/>
   <rect x="37" y="99" width="11" height="6"/>
   <!-- lasso -->
   <ellipse cx="72" cy="100" rx="7.5" ry="5" fill="none" stroke="#bcbcbc" stroke-width="1.8"/>
   <path d="M67 103 C68 106 70 107 69 111" fill="none" stroke="#bcbcbc" stroke-width="1.8"/>
   <!-- fuzzy -->
   <path d="M94 93h2v1.5h-2zM98 93h2v1.5h-2zM102 93h2v1.5h-2zM94 101h2v1.5h-2zM98 101h2v1.5h-2zM102 101h2v1.5h-2zM94 96h1.5v3h-1.5zM104 96h1.5v3h-1.5z"/>
   <circle cx="100" cy="97.5" r="3"/>
   <circle cx="97" cy="107" r="2.8" fill="#8a8a8a"/>
   <circle cx="105" cy="107" r="2.3" fill="none" stroke="#bcbcbc" stroke-width="1.3"/>
   <!-- crop -->
   <path d="M123 96h13v13h-13z M125 98v9h9v-9z" fill-rule="evenodd"/><rect x="124" y="94" width="2" height="2"/><rect x="135" y="108" width="2" height="3"/><rect x="137" y="106" width="1" height="1.5"/>
   <!-- transform -->
   <rect x="150" y="93" width="4" height="2"/>
   <path d="M155 95 L161 100 L162 98 L163 103 L158 102 L160 101 L154 96 Z"/>
   <rect x="157" y="104" width="11" height="6" rx="1"/>
   <!-- corner triangles row1 -->
   <path d="M23 112h3v-3zM52 112h3v-3zM81 112h3v-3zM110 112h3v-3zM168 112h3v-3z"/>
   <!-- heal -->
   <path d="M5 139 L5 130 C8 128 10 126 12 124 C14 121 19 121 20 125 L17 126 C16 125 15 125 14 127 C14 129 17 131 22 131 L22 139 Z"/>
   <!-- bucket -->
   <path d="M35 130 L43 124 L50 131 L42 138 Z"/>
   <rect x="43" y="121" width="2" height="9"/>
   <path d="M35 130 C34 133 36 136 36 136 L37 131 Z" fill="#8a8a8a"/>
   <!-- pencil -->
   <path d="M64 139 L66 133 L77 122 L80 125 L69 136 Z"/>
   <!-- eraser -->
   <path d="M98 124 L103 119 L108 124 L103 129 Z" fill="#c8c8c8"/>
   <path d="M94 128 L98 124 L103 129 L99 133 Z" fill="#7a7a7a"/>
   <rect x="93" y="136" width="3" height="1.3"/><rect x="98" y="136" width="8" height="1.3"/>
   <!-- clone -->
   <circle cx="130" cy="125" r="2.5"/><rect x="129" y="127" width="2" height="4"/>
   <path d="M123 131h14v7h-14z"/><path d="M127 134h6l-3 3z" fill="#454545"/>
   <!-- smudge -->
   <path d="M152 128 C151 123 156 121 160 122 C165 123 167 127 165 131 C163 135 157 134 157 131 L160 130 C162 128 159 126 157 128 L151 136 C150 138 148 136 150 134 L155 129 Z"/>
   <path d="M24 139h3v-3zM52 139h3v-3zM81 139h3v-3zM139 139h3v-3zM168 139h3v-3z"/>
   <!-- paths -->
   <rect x="5" y="149" width="2" height="17"/><rect x="4" y="149" width="4" height="2"/><rect x="4" y="164" width="4" height="3"/>
   <path d="M7 156 C10 151 14 149 18 150" fill="none" stroke="#bcbcbc" stroke-width="1.3"/>
   <rect x="15" y="156" width="8" height="10" rx="1"/><rect x="17" y="152" width="3" height="4"/>
   <!-- text -->
   <path d="M35 166 L41 149 L45 149 L51 166 L47 166 L46 162 L40 162 L39 166 Z M41 159 L45 159 L43 153 Z" fill-rule="evenodd"/>
   <!-- picker -->
   <path d="M66 166 L75 155 L77 157 L68 167 Z"/><circle cx="67" cy="166" r="1.5"/>
   <ellipse cx="78" cy="152" rx="3" ry="3.5" transform="rotate(40 78 152)"/>
   <path d="M81 167h3v-3z"/>
   <!-- zoom -->
   <circle cx="99" cy="155" r="5" fill="none" stroke="#bcbcbc" stroke-width="2"/>
   <path d="M102 158 L108 164" stroke="#bcbcbc" stroke-width="2.5"/>
  </g>
 </svg>
 <!-- fg/bg -->
 <div class="a" style="left:85px;top:190px;width:24px;height:24px;background:#000;padding:1px"><div style="width:22px;height:22px;border:1px solid #fff;background:#4a5590"></div></div>
 <div class="a" style="left:69px;top:176px;width:24px;height:24px;background:#000;padding:1px"><div style="width:22px;height:22px;border:1px solid #fff;background:#000"></div></div>
 <svg class="a" style="left:96px;top:175px" width="14" height="14"><path d="M3 2 L0.5 4.5 L3 7 M1 4.5 L9 4.5 L9 11 M6.5 9 L9 11.5 L11.5 9" fill="none" stroke="#c8c8c8" stroke-width="1.8"/></svg>
 <div class="a" style="left:69px;top:202px;width:8px;height:8px;background:#000;border:1px solid #fff"></div>
 <div class="a" style="left:74px;top:207px;width:8px;height:8px;background:#fff;border:1px solid #000"></div>
 <!-- tabs -->
 <div class="a" style="left:0;top:245px;width:176px;height:1px;background:#555"></div>
 <div class="a" style="left:1px;top:224px;width:22px;height:21px;background:#2a2a2a"></div>
 <div class="a" style="left:24px;top:224px;width:21px;height:21px;background:#2a2a2a"></div>
 <div class="a" style="left:46px;top:224px;width:21px;height:21px;background:#2a2a2a"></div>
 <div class="a" style="left:68px;top:221px;width:24px;height:25px;background:#454545;border:1px solid #555;border-bottom:none"></div>
 <svg class="a" style="left:0;top:221px" width="92" height="25" viewBox="0 221 92 25">
  <path d="M4 236 L14 226" stroke="#c8c8c8" stroke-width="2.2" stroke-linecap="round"/><circle cx="15" cy="237" r="5.3" fill="#c8c8c8"/><rect x="14" y="235.5" width="2" height="5" fill="#2a2a2a"/><rect x="14" y="232.5" width="2" height="1.6" fill="#2a2a2a"/>
  <path d="M41 234 C41 229 38 228 35 228 L29 228" fill="none" stroke="#777" stroke-width="1.8"/><path d="M32 225 L28.5 228 L32 231" fill="none" stroke="#777" stroke-width="1.8"/>
  <path d="M37 243 C40 243 41 241 41 239 C41 236 39 235 36 235 L28 235" fill="none" stroke="#c8c8c8" stroke-width="2"/><path d="M31.5 231.5 L27.5 235 L31.5 238.5" fill="none" stroke="#c8c8c8" stroke-width="2"/>
  <rect x="48" y="225" width="18" height="18" fill="#000"/><rect x="49" y="226" width="16" height="16" fill="#fff"/><path d="M55 231 h4 M56 233 L54 237 M58 233 L60 237" stroke="#ccc" stroke-width="0.6"/>
  <rect x="72.5" y="227.5" width="15" height="10" fill="none" stroke="#c8c8c8" stroke-width="1.4"/><path d="M78.5 226.5 L80 224.5 L81.5 226.5 Z" fill="#c8c8c8"/><path d="M72 239.5 L88 239.5 M74 239.5 L73 242.5 M86 239.5 L87 242.5" stroke="#c8c8c8" stroke-width="1.3"/>
 </svg>


 <div class="lbl" style="left:3px;top:248px;font-weight:bold;font-size:11px;color:#e0e0e0">Eraser</div>
 <div class="combo" style="left:3px;top:261px;width:122px;height:28px"></div>
 <div class="lbl" style="left:10px;top:269px;color:#777">Mode</div>
 <div class="lbl" style="left:64px;top:269px;color:#868686">Normal</div>
 <svg class="a" style="left:105px;top:270px" width="14" height="10"><use href="#chev"/></svg>
 <div class="combo" style="left:129px;top:261px;width:46px;height:28px"></div>
 <svg class="a" style="left:136px;top:268px" width="14" height="14" opacity="0.7"><use href="#reset"/></svg>
 <svg class="a" style="left:155px;top:270px" width="14" height="10"><use href="#chev"/></svg>
 <div class="sl" style="left:3px;top:293px;width:172px;height:16px"><div class="f" style="width:158px"></div><div class="k" style="left:158px;width:2px"></div><div class="n">Opacity</div><div class="v" style="left:100px;width:56px">100.0</div><svg class="a" style="left:160px;top:0" width="10" height="14"><use href="#spind"/></svg></div>
 <div class="a" style="left:3px;top:313px;width:36px;height:36px;background:#2b2b2b;border:1px solid #232323;border-radius:4px"></div>
 <div class="a" style="left:8px;top:318px;width:26px;height:26px;border:1px solid #000;background:radial-gradient(circle at 50% 50%,#000 0,#1a1a1a 2px,#555 4px,#999 6px,#d0d0d0 8.5px,#f6f6f6 11px,#fff 12px)"></div>
 <svg class="a" style="left:28px;top:338px" width="6" height="6"><path d="M3 0.5v5M0.5 3h5" stroke="#3344cc" stroke-width="1.3"/></svg>
 <div class="lbl" style="left:41px;top:314px">Brush</div>
 <div class="a" style="left:41px;top:329px;width:102px;height:19px;background:#202020;border:1px solid #2b2b2b"></div>
 <div class="lbl" style="left:45px;top:332px">2. Hardness 050</div>
 <svg class="a" style="left:150px;top:325px" width="20" height="20"><use href="#edit"/></svg>
 <div class="sl" style="left:3px;top:358px;width:120px;height:16px"><div class="f" style="width:62px"></div><div class="k" style="left:62px;width:2px"></div><div class="n">Size</div><div class="v" style="left:40px;width:66px">411.00</div><svg class="a" style="left:108px;top:0" width="10" height="14"><use href="#spin"/></svg></div>
 <svg class="a" style="left:129px;top:359px" width="14" height="14"><use href="#reset"/></svg>
 <div class="chain" style="left:149px;top:353px"><svg width="26" height="26"><use href="#chain"/></svg></div>
 <div class="sl" style="left:3px;top:388px;width:120px;height:16px"><div class="f" style="width:53px"></div><div class="k" style="left:53px;width:2px"></div><div class="n">Aspect Ratio</div><div class="v" style="left:40px;width:66px">0.00</div><svg class="a" style="left:108px;top:0" width="10" height="14"><use href="#spin"/></svg></div>
 <svg class="a" style="left:129px;top:389px" width="14" height="14"><use href="#reset"/></svg>
 <div class="chain" style="left:149px;top:383px"><svg width="26" height="26"><use href="#chain"/></svg></div>
 <div class="sl" style="left:3px;top:418px;width:120px;height:16px"><div class="f" style="width:53px"></div><div class="k" style="left:53px;width:2px"></div><div class="n">Angle</div><div class="v" style="left:40px;width:66px">0.00</div><svg class="a" style="left:108px;top:0" width="10" height="14"><use href="#spin"/></svg></div>
 <svg class="a" style="left:129px;top:419px" width="14" height="14"><use href="#reset"/></svg>
 <div class="chain" style="left:149px;top:413px"><svg width="26" height="26"><use href="#chain"/></svg></div>
 <div class="sl" style="left:3px;top:448px;width:120px;height:16px"><div class="f" style="width:13px"></div><div class="k" style="left:13px;width:2px"></div><div class="n">Spacing</div><div class="v" style="left:40px;width:66px">10.0</div><svg class="a" style="left:108px;top:0" width="10" height="14"><use href="#spin"/></svg></div>
 <svg class="a" style="left:129px;top:449px" width="14" height="14"><use href="#reset"/></svg>
 <div class="chain" style="left:149px;top:443px"><svg width="26" height="26"><use href="#chain"/></svg></div>
 <div class="sl" style="left:3px;top:478px;width:120px;height:16px"><div class="f" style="width:83px"></div><div class="k" style="left:83px;width:2px"></div><div class="n">Hardness</div><div class="v" style="left:40px;width:66px">79.0</div><svg class="a" style="left:108px;top:0" width="10" height="14"><use href="#spin"/></svg></div>
 <svg class="a" style="left:129px;top:479px" width="14" height="14"><use href="#reset"/></svg>
 <div class="chain" style="left:149px;top:473px"><svg width="26" height="26"><use href="#chain"/></svg></div>
 <div class="sl" style="left:3px;top:508px;width:120px;height:16px"><div class="f" style="width:107px"></div><div class="k" style="left:107px;width:2px"></div><div class="n">Force</div><div class="v" style="left:40px;width:66px">100.0</div><svg class="a" style="left:108px;top:0" width="10" height="14"><use href="#spind"/></svg></div>
 <svg class="a" style="left:129px;top:509px" width="14" height="14"><use href="#reset"/></svg>

 <div class="a" style="left:3px;top:533px;width:36px;height:36px;background:#2b2b2b;border:1px solid #232323;border-radius:4px"></div>
 <div class="a" style="left:8px;top:538px;width:26px;height:26px;border:1px solid #000;background:#2b2b2b"></div>
 <svg class="a" style="left:9px;top:539px" width="24" height="24"><circle cx="4.5" cy="4.5" r="2" fill="#c8c8c8"/><circle cx="9.5" cy="4" r="2.3" fill="#c8c8c8"/><circle cx="4" cy="10" r="2.2" fill="#c8c8c8"/><path d="M9 17 L12 14.5 C8 12 10 8 14 8 C16 8 17 9 18 10 L21 8 L21 21 L8 21 Z" fill="#c8c8c8"/></svg>
 <div class="lbl" style="left:41px;top:533px">Dynamics</div>
 <div class="a" style="left:41px;top:549px;width:102px;height:19px;background:#202020;border:1px solid #2b2b2b"></div>
 <div class="lbl" style="left:45px;top:552px">Dynamics Off</div>
 <svg class="a" style="left:150px;top:545px" width="20" height="20"><use href="#edit"/></svg>
 <div class="a" style="left:5px;top:575px;width:13px;height:13px;background:#222;border-radius:3px"></div>
 <div class="a" style="left:8px;top:580px;width:7px;height:3px;background:#fff"></div>
 <div class="lbl" style="left:22px;top:576px">Dynamics Options</div>
 <div class="lbl" style="left:3px;top:591px">Fade Options</div>
 <div class="sl" style="left:15px;top:613px;width:111px;height:16px"><div class="f" style="width:8px"></div><div class="k" style="left:8px;width:2px"></div><div class="n">Fade length</div><div class="v" style="left:40px;width:56px">100</div><svg class="a" style="left:100px;top:0" width="10" height="14"><use href="#spin"/></svg></div>
 <div class="combo" style="left:128px;top:607px;width:47px;height:28px"></div>
 <div class="lbl" style="left:135px;top:614px">px</div>
 <svg class="a" style="left:155px;top:616px" width="14" height="10"><use href="#chev"/></svg>
 <div class="combo" style="left:15px;top:637px;width:160px;height:28px"></div>
 <div class="lbl" style="left:22px;top:644px">Repeat</div>
 <div class="lbl" style="left:79px;top:644px">None (extend)</div>
 <svg class="a" style="left:155px;top:646px" width="14" height="10"><use href="#chev"/></svg>
 <div class="chk" style="left:17px;top:670px"></div><div class="lbl" style="left:35px;top:669px">Reverse</div>
 <div class="chk" style="left:5px;top:693px"></div><div class="lbl" style="left:23px;top:692px">Apply Jitter</div>
 <div class="chk" style="left:5px;top:718px"></div><div class="lbl" style="left:23px;top:717px">Smooth stroke</div>
 <div class="chk" style="left:5px;top:743px"></div><div class="lbl" style="left:23px;top:742px">Lock brush to view</div>
 <div class="chk" style="left:5px;top:766px"></div><div class="lbl" style="left:23px;top:765px">Incremental</div>
 <div class="chk" style="left:5px;top:789px"></div><svg class="a" style="left:7px;top:791px" width="9" height="9"><path d="M1.5 1.5 L7.5 7.5 M7.5 1.5 L1.5 7.5" stroke="#fff" stroke-width="2"/></svg><div class="lbl" style="left:23px;top:788px;color:#8a8a8a">Hard edge</div>
 <div class="chk" style="left:5px;top:812px"></div><div class="lbl" style="left:23px;top:811px">Anti erase  (Alt)</div>
 <div class="a" style="left:0;top:1051px;width:176px;height:29px;background:#3c3c3c"></div>
 <div class="a" style="left:0;top:245px;width:1px;height:835px;background:#555"></div>
 <div class="a" style="left:1px;top:246px;width:2px;height:805px;background:#3e3e3e"></div>
 <div class="a" style="left:1px;top:1078px;width:176px;height:1px;background:#555"></div>
 <svg class="a" style="left:0;top:1050px" width="176" height="30">
  <g fill="#cfcfcf"><rect x="23" y="6" width="2.2" height="8"/><path d="M19.5 11 L24.1 16 L28.7 11 Z"/><path d="M18 15 L20 15 L20 19 L28 19 L28 15 L30 15 L30 21 L18 21 Z"/></g>
  <path d="M62 10 A6 6 0 1 0 67 8" fill="none" stroke="#cfcfcf" stroke-width="2"/><path d="M60 5.5 L60 12 L66 11 Z" fill="#cfcfcf"/>
  <rect x="102" y="6" width="16" height="16" rx="1.5" fill="#cfcfcf"/><path d="M105 9 L115 19 M115 9 L105 19" stroke="#3e3e3e" stroke-width="2.4"/>
  <path d="M150 10 A6 6 0 1 1 152 20" fill="none" stroke="#cfcfcf" stroke-width="2"/><path d="M146.5 11.5 L152 7 L152.5 13 Z" fill="#cfcfcf"/><circle cx="149" cy="19.5" r="2.3" fill="#cfcfcf"/>
 </svg>
 <svg class="a" style="left:161px;top:227px" width="12" height="12"><rect x="0.5" y="0.5" width="11" height="11" fill="none" stroke="#bbb"/><path d="M9 2.5 L3 6 L9 9.5 Z" fill="#bbb"/></svg>
</div>
<!-- RIGHT -->
<div id="right">
<div class="a" style="left:1521px;top:64px;width:399px;height:1016px;background:#454545"></div>
<div class="a" style="left:1520px;top:67px;width:162px;height:20px;background:#2a2a2a"></div>
<div class="a" style="left:1613px;top:64px;width:25px;height:24px;background:#3c3c3c;border:1px solid #555;border-bottom:none"></div>
<svg class="a" style="left:1520px;top:64px" width="165" height="24">
<defs><radialGradient id="bdot"><stop offset="0" stop-color="#000"/><stop offset="0.35" stop-color="#222"/><stop offset="1" stop-color="#fff"/></radialGradient>
<linearGradient id="ograd" x1="0" x2="1"><stop offset="0" stop-color="#f0a030"/><stop offset="0.3" stop-color="#ffd070"/><stop offset="0.6" stop-color="#f0a030"/><stop offset="1" stop-color="#ffc050"/></linearGradient>
<linearGradient id="kgrad" x1="0" x2="1"><stop offset="0" stop-color="#000"/><stop offset="1" stop-color="#777"/></linearGradient></defs>
<rect x="3" y="5" width="17" height="17" fill="#000"/><rect x="4" y="6" width="15" height="15" fill="#fff"/><circle cx="10.5" cy="13" r="6" fill="url(#bdot)"/><path d="M15 18h5M17.5 15.5v5" stroke="#3355dd" stroke-width="1.3"/>
<rect x="27" y="5" width="17" height="17" fill="#000"/><rect x="28" y="6" width="15" height="15" fill="url(#ograd)"/>
<rect x="51" y="5" width="17" height="17" fill="#000"/><rect x="52" y="6" width="15" height="15" fill="#fff"/><text x="52.5" y="18" font-family="Liberation Sans" font-weight="bold" font-size="10" fill="#000">Aa</text>
<rect x="74" y="5" width="16" height="17" fill="#000"/><rect x="75" y="6" width="14" height="15" fill="#e8f2fc"/><path d="M78 12 L80 8" stroke="#5a8acc" stroke-width="1.3"/>
<path d="M99 22 C99 19 101 17 103 17 L114 5 L115 6 L105 19 C104 21 102 22 99 22 Z" fill="#bdbdbd"/>
<rect x="120" y="5" width="16" height="17" fill="#000"/><rect x="121" y="6" width="14" height="15" fill="url(#kgrad)"/><rect x="128" y="6" width="3.5" height="3.5" fill="#555"/><rect x="131.5" y="9.5" width="3.5" height="3.5" fill="#777"/><rect x="128" y="13" width="3.5" height="3.5" fill="#555"/><rect x="131.5" y="16.5" width="3.5" height="3.5" fill="#777"/>
<rect x="144" y="9" width="15" height="13" fill="#ccc"/><g fill="#111"><rect x="145" y="8" width="2" height="2"/><rect x="149" y="8" width="2" height="2"/><rect x="153" y="8" width="2" height="2"/><rect x="157" y="8" width="2" height="2"/><rect x="147" y="11" width="2" height="2"/><rect x="151" y="11" width="2" height="2"/><rect x="155" y="11" width="2" height="2"/><rect x="145" y="14" width="2" height="2"/><rect x="149" y="14" width="2" height="2"/><rect x="153" y="14" width="2" height="2"/><rect x="157" y="14" width="2" height="2"/><rect x="147" y="17" width="2" height="2"/><rect x="151" y="17" width="2" height="2"/><rect x="155" y="17" width="2" height="2"/></g>
</svg>
<svg class="a" style="left:1902px;top:70px" width="12" height="12"><rect x="0.5" y="0.5" width="11" height="11" fill="none" stroke="#bbb"/><path d="M9 2.5 L3 6 L9 9.5 Z" fill="#bbb"/></svg>
<div class="a" style="left:1520px;top:87px;width:398px;height:297px;border:1px solid #555;border-right:none"></div>
<div class="a" style="left:1523px;top:91px;width:393px;height:18px;background:#1f1f1f"></div>
<div class="lbl" style="left:1526px;top:93px">2. Hardness 050</div>
<div class="a" style="left:1523px;top:111px;width:393px;height:135px;background:#fff"></div>
<div class="a" style="left:1694px;top:153px;width:51px;height:51px;background:radial-gradient(circle at 25.5px 25.5px,#000 0,#1a1a1a 4px,#555 8px,#999 12px,#d0d0d0 17px,#f4f4f4 22px,#fff 25px)"></div>
<svg class="a" style="left:1906px;top:236px" width="10" height="10"><path d="M10 0 L10 10 L0 10 Z" fill="#5a7ae8"/></svg>
<div class="lbl" style="left:1522px;top:253px;color:#8a8a8a">Shape:</div>
<div class="a" style="left:1558px;top:247px;width:26px;height:26px;background:#2b2b2b;border:1px solid #1e1e1e;border-radius:4px"></div>
<svg class="a" style="left:1558px;top:247px" width="80" height="26"><circle cx="13" cy="13" r="6" fill="#bdbdbd"/><rect x="33" y="7" width="12" height="12" fill="#bdbdbd"/><path d="M65 6 L72 13 L65 20 L58 13 Z" fill="#bdbdbd"/></svg>
<div class="a" style="left:1520px;top:274px;width:398px;height:110px;background:#3e3e3e"></div>
<div class="a" style="left:1523px;top:276px;width:390px;height:14px;background:#383838;overflow:hidden">
<div class="a" style="left:0;top:0;width:8px;height:14px;background:#575757"></div>
<div class="a" style="left:8px;top:0;width:2px;height:14px;background:#111"></div>
<div class="lbl" style="left:1px;top:0;color:#555">Radius</div>
<div class="lbl" style="left:340px;top:0;width:40px;text-align:right;color:#555">25.0</div>
<svg class="a" style="left:381px;top:-1px" width="10" height="16"><use href="#spind"/></svg>
</div>
<div class="a" style="left:1523px;top:294px;width:390px;height:14px;background:#383838;overflow:hidden">
<div class="lbl" style="left:1px;top:0;color:#555">Spikes</div>
<div class="lbl" style="left:340px;top:0;width:40px;text-align:right;color:#555">2</div>
<svg class="a" style="left:381px;top:-1px" width="10" height="16"><use href="#spind"/></svg>
</div>
<div class="a" style="left:1523px;top:312px;width:390px;height:14px;background:#383838;overflow:hidden">
<div class="a" style="left:0;top:0;width:190px;height:14px;background:#575757"></div>
<div class="a" style="left:190px;top:0;width:2px;height:14px;background:#111"></div>
<div class="lbl" style="left:1px;top:0;color:#555">Hardness</div>
<div class="lbl" style="left:340px;top:0;width:40px;text-align:right;color:#555">0.50</div>
<svg class="a" style="left:381px;top:-1px" width="10" height="16"><use href="#spind"/></svg>
</div>
<div class="a" style="left:1523px;top:330px;width:390px;height:14px;background:#383838;overflow:hidden">
<div class="lbl" style="left:1px;top:0;color:#555">Aspect ratio</div>
<div class="lbl" style="left:340px;top:0;width:40px;text-align:right;color:#555">1.0</div>
<svg class="a" style="left:381px;top:-1px" width="10" height="16"><use href="#spind"/></svg>
</div>
<div class="a" style="left:1523px;top:348px;width:390px;height:14px;background:#383838;overflow:hidden">
<div class="lbl" style="left:1px;top:0;color:#555">Angle</div>
<div class="lbl" style="left:340px;top:0;width:40px;text-align:right;color:#555">0.0</div>
<svg class="a" style="left:381px;top:-1px" width="10" height="16"><use href="#spind"/></svg>
</div>
<div class="a" style="left:1523px;top:366px;width:390px;height:14px;background:#383838;overflow:hidden">
<div class="a" style="left:0;top:0;width:15px;height:14px;background:#575757"></div>
<div class="a" style="left:15px;top:0;width:2px;height:14px;background:#111"></div>
<div class="lbl" style="left:1px;top:0;color:#555">Spacing</div>
<div class="lbl" style="left:340px;top:0;width:40px;text-align:right;color:#555">10.0</div>
<svg class="a" style="left:381px;top:-1px" width="10" height="16"><use href="#spind"/></svg>
</div>
<div class="lbl" style="left:1524px;top:313px;color:#e6e6e6">Hardness</div>
<div class="a" style="left:1523px;top:277px;width:9px;height:13px;overflow:hidden"><div class="lbl" style="left:1px;top:-1px;color:#e6e6e6">R</div></div>
<div class="a" style="left:1523px;top:367px;width:15px;height:13px;overflow:hidden"><div class="lbl" style="left:1px;top:-1px;color:#e6e6e6">Sp</div></div>
<svg class="a" style="left:1708px;top:382px" width="24" height="5"><rect x="2" y="1" width="4" height="2" fill="#bbb"/><rect x="10" y="1" width="4" height="2" fill="#bbb"/><rect x="18" y="1" width="4" height="2" fill="#bbb"/></svg>
<div class="a" style="left:1520px;top:411px;width:398px;height:1px;background:#555"></div>
<div class="a" style="left:1579px;top:390px;width:69px;height:20px;background:#262626"></div>
<div class="a" style="left:1649px;top:390px;width:51px;height:20px;background:#262626"></div>
<div class="a" style="left:1520px;top:387px;width:59px;height:25px;background:#3c3c3c;border:1px solid #555;border-bottom:none"></div>
<svg class="a" style="left:1520px;top:388px" width="185" height="22"><g fill="#cfcfcf"><path d="M4 2 L18 2 L16 6 L2 6 Z"/><path d="M4 8 L18 8 L16 12 L2 12 Z"/><path d="M4 14 L18 14 L16 18 L2 18 Z"/></g>
<rect x="61.5" y="3.5" width="15" height="15" fill="none" stroke="#cfcfcf" stroke-width="1.3"/><rect x="64" y="6" width="2" height="10" fill="#666"/><rect x="68" y="6" width="2" height="10" fill="#cfcfcf"/><rect x="72" y="6" width="2" height="10" fill="#cfcfcf"/>
<path d="M130 8 L146 8 M132 5 L132 11 M144 5 L144 11" stroke="#cfcfcf" stroke-width="2.5" fill="none"/><path d="M131 17 C133 10 143 10 145 17" stroke="#cfcfcf" stroke-width="2" fill="none"/></svg>
<div class="lbl" style="left:1540px;top:393px;font-size:11.5px">Layers</div>
<div class="lbl" style="left:1598px;top:393px;font-size:11.5px">Channels</div>
<div class="lbl" style="left:1668px;top:393px;font-size:11.5px">Paths</div>
<svg class="a" style="left:1902px;top:393px" width="12" height="12"><rect x="0.5" y="0.5" width="11" height="11" fill="none" stroke="#bbb"/><path d="M9 2.5 L3 6 L9 9.5 Z" fill="#bbb"/></svg>
<div class="combo" style="left:1522px;top:413px;width:346px;height:28px"></div>
<div class="lbl" style="left:1529px;top:421px;font-size:11.5px">Mode</div>
<div class="lbl" style="left:1808px;top:421px;font-size:11.5px">Normal</div>
<svg class="a" style="left:1849px;top:422px" width="14" height="10"><use href="#chev"/></svg>
<div class="combo" style="left:1870px;top:413px;width:46px;height:28px"></div>
<svg class="a" style="left:1876px;top:420px" width="14" height="14"><use href="#reset"/></svg>
<svg class="a" style="left:1896px;top:422px" width="14" height="10"><use href="#chev"/></svg>
<div class="sl" style="left:1522px;top:442px;width:394px;height:16px"><div class="f" style="width:380px"></div><div class="k" style="left:380px;width:2px"></div><div class="n">Opacity</div><div class="v" style="left:300px;width:78px">100.0</div><svg class="a" style="left:382px;top:0" width="10" height="14"><use href="#spind"/></svg></div>
<div class="lbl" style="left:1522px;top:465px;font-size:11.5px">Lock:</div>
<svg class="a" style="left:1554px;top:462px" width="75" height="20"><path d="M2 18 C2 16 3 15 5 15 L14 4 L15 5 L7 16 C6 18 4 18 2 18 Z" fill="#bdbdbd"/>
<path d="M36 2 L39 5 L37 5 L37 9 L41 9 L41 7 L44 10 L41 13 L41 11 L37 11 L37 15 L39 15 L36 18 L33 15 L35 15 L35 11 L31 11 L31 13 L28 10 L31 7 L31 9 L35 9 L35 5 L33 5 Z" fill="#bdbdbd"/>
<rect x="55" y="2" width="16" height="16" fill="#8a8a8a"/><g fill="#d0d0d0"><rect x="55" y="2" width="4" height="4"/><rect x="63" y="2" width="4" height="4"/><rect x="59" y="6" width="4" height="4"/><rect x="67" y="6" width="4" height="4"/><rect x="55" y="10" width="4" height="4"/><rect x="63" y="10" width="4" height="4"/><rect x="59" y="14" width="4" height="4"/><rect x="67" y="14" width="4" height="4"/></g></svg>
<div class="a" style="left:1522px;top:485px;width:395px;height:565px;background:#303030"></div>
<div class="a" style="left:1523px;top:486px;width:393px;height:30px;background:#1f1f1f"></div>
<svg class="a" style="left:1527px;top:493px" width="20" height="16"><path d="M1 8 C5 2 15 2 19 8 C15 14 5 14 1 8 Z" fill="none" stroke="#cfcfcf" stroke-width="1.8"/><circle cx="10" cy="8" r="3.5" fill="#cfcfcf"/><circle cx="9" cy="7" r="1.2" fill="#1f1f1f"/></svg>
<div class="a" style="left:1598px;top:488px;width:36px;height:27px;background:#fff"></div>
<svg class="a" style="left:1598px;top:488px" width="36" height="27"><g fill="none" stroke="#bbb" stroke-width="0.6"><path d="M15 8 C15 5 21 5 21 8 M15 10 L11 17 M21 10 L25 16 M17 12 L17 19 M20 12 L20 19"/></g><path d="M15 7 C16 5 20 5 21 7" stroke="#666" stroke-width="1" fill="none"/></svg>
<div class="lbl" style="left:1638px;top:495px;font-size:11px;color:#e6e6e6">Babyhead.png</div>
<div class="a" style="left:1520px;top:1050px;width:400px;height:30px;background:#454545"></div>
<svg class="a" style="left:1520px;top:1050px" width="400" height="30"><g fill="none" stroke="#cfcfcf" stroke-width="1.6">
<path d="M21 8 L27 8 L31 12 L31 22 L21 22 Z"/><path d="M18 5 L18 11 M15 8 L21 8"/>
<path d="M67 9 L71 9 L73 11 L82 11 L82 22 L67 22 Z"/><path d="M74.5 13 L74.5 20 M71 16.5 L78 16.5" stroke-width="2"/>
<path d="M118 18 L124 11 L130 18" stroke-width="2"/>
<path d="M167 11 L173 18 L179 11" stroke-width="2"/>
<rect x="215" y="8" width="9" height="7"/><path d="M219 15 L219 19 L229 19 L229 12 L224 12"/>
<path d="M263 11 L271 11 M262 15 L270 15 M263 19 L271 19" stroke-width="2.5"/><path d="M276 9 L276 21 M273 18 L276 21 L279 18" stroke-width="1.8"/>
</g>
<path d="M309 20 L315 14 L329 14 L323 22 L309 22 Z" fill="#cfcfcf"/><path d="M313 7 C313 5 325 5 325 7 L325 11 C325 14 313 14 313 11 Z" fill="#cfcfcf"/>
<rect x="362" y="6" width="17" height="17" fill="#cfcfcf"/><path d="M365 9 L376 20 M376 9 L365 20" stroke="#454545" stroke-width="2.5"/>
</svg>
</div>
</body></html>
